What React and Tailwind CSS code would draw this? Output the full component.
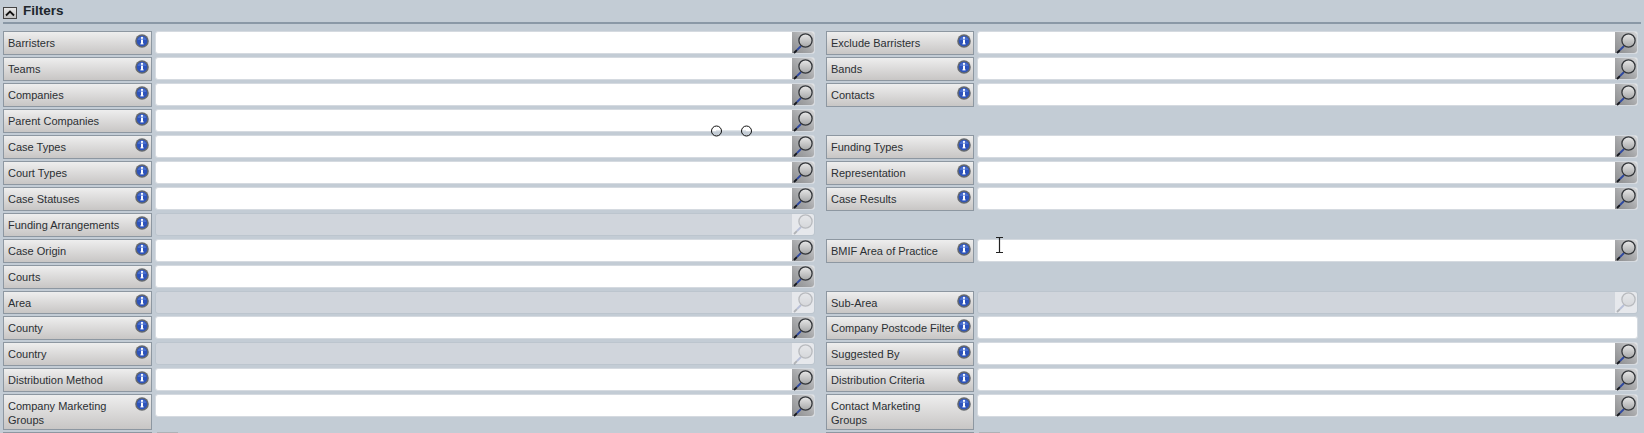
import React from "react";

const rows = [
  ["Barristers", "Exclude Barristers"],
  ["Teams", "Bands"],
  ["Companies", "Contacts"],
  ["Parent Companies", null],
  ["Case Types", "Funding Types"],
  ["Court Types", "Representation"],
  ["Case Statuses", "Case Results"],
  ["Funding Arrangements", null],
  ["Case Origin", "BMIF Area of Practice"],
  ["Courts", null],
  ["Area", "Sub-Area"],
  ["County", "Company Postcode Filter"],
  ["Country", "Suggested By"],
  ["Distribution Method", "Distribution Criteria"],
  ["Company Marketing Groups", "Contact Marketing Groups"],
];

const disabledFields = ["Funding Arrangements", "Area", "Sub-Area", "Country"];

function InfoIcon() {
  return (
    <svg width="14" height="14" viewBox="0 0 14 14" className="shrink-0 mt-[2px]">
      <circle cx="7" cy="7" r="6.8" fill="#65696e" />
      <circle cx="7" cy="7" r="5.3" fill="#2d53bb" />
      <path d="M2.6 6 A4.6 4.6 0 0 1 11.4 6 Z" fill="#4a70d0" />
      <circle cx="7" cy="3.9" r="1.05" fill="#fff" />
      <rect x="6" y="5.6" width="2" height="4.4" fill="#fff" />
      <rect x="5.4" y="9.4" width="3.2" height="1" fill="#fff" />
    </svg>
  );
}

function SearchIcon({ disabled }) {
  return (
    <div
      className={`w-[22px] h-full shrink-0 flex items-center justify-center rounded-r-[3px] ${
        disabled ? "bg-[#e6e8ec]" : "bg-gradient-to-tr from-[#8b8c8e] via-[#a9aaac] to-[#d6d7d9]"
      }`}
    >
      <svg width="22" height="22" viewBox="0 0 22 22" className={disabled ? "opacity-25" : ""}>
        <defs>
          <linearGradient id="lens" x1="0" y1="0" x2="0" y2="1">
            <stop offset="0" stopColor="#e8e8e8" />
            <stop offset="1" stopColor="#a6a7a8" />
          </linearGradient>
        </defs>
        <path d="M2 21 L5 18" stroke="#15181f" strokeWidth="1.8" />
        <path d="M5 18 L9 14" stroke="#2d47a0" strokeWidth="1.8" />
        <circle cx="13.5" cy="8.5" r="6.6" fill="url(#lens)" stroke="#33363a" strokeWidth="1.3" />
      </svg>
    </div>
  );
}

function Field({ label, tall, narrow }) {
  const disabled = disabledFields.includes(label);
  const noSearch = label === "Company Postcode Filter";
  return (
    <div className="flex items-start gap-[3px]">
      <div
        className={`shrink-0 flex items-start justify-between border border-[#8d97a1] bg-gradient-to-b from-[#eeeeee] to-[#c8c6c5] pl-[4px] pr-[2px] ${
          narrow ? "w-[148px]" : "w-[149px]"
        } ${tall ? "h-[35.68px]" : "h-[23.93px]"}`}
      >
        <span className="pt-[4px] text-[11px] leading-[14px] text-[#2b2f33]">{label}</span>
        <InfoIcon />
      </div>
      <div
        className={`flex-1 h-[23px] flex items-stretch rounded-[3px] border ${
          disabled ? "bg-[#d0d5dc] border-[#bcc5ce]" : "bg-white border-[#d5dae0]"
        }`}
      >
        <input disabled={disabled} className="flex-1 min-w-0 outline-none bg-transparent" />
        {!noSearch && <SearchIcon disabled={disabled} />}
      </div>
    </div>
  );
}

export default function App() {
  return (
    <div className="relative h-screen overflow-hidden bg-[#c3ccd5] font-['Liberation_Sans',Arial,sans-serif]">
      <div className="mx-[3px] h-[24px] flex items-center gap-[6px] border-b-2 border-[#8a98a6]">
        <button className="mt-[4px] w-[14px] h-[12px] flex items-center justify-center border border-[#444] bg-gradient-to-b from-[#e8e8e8] to-[#c0c0c0]">
          <svg width="10" height="7" viewBox="0 0 10 7">
            <path d="M1 5.5 L5 1.5 L9 5.5" fill="none" stroke="#111" strokeWidth="1.8" />
          </svg>
        </button>
        <h2 className="text-[13.5px] font-bold text-[#20262c]">Filters</h2>
      </div>

      <div className="pt-[7.3px] pl-[3px] pr-[6px] grid grid-cols-2 gap-x-[11px] gap-y-[2px]">
        {rows.map(([left, right]) => {
          const tall = left === "Company Marketing Groups";
          return (
            <React.Fragment key={left}>
              <Field label={left} tall={tall} />
              {right ? <Field label={right} tall={tall} narrow /> : <div />}
            </React.Fragment>
          );
        })}
        {/* next row, only its top edge is in the picture */}
        <div className="flex gap-[5px]">
          <div className="h-[24px] w-[149px] border border-[#8d97a1] bg-[#eeeeee]" />
          <div className="h-[24px] w-[21px] bg-[#adb1b6]" />
        </div>
        <div className="flex gap-[5px]">
          <div className="h-[24px] w-[148px] border border-[#8d97a1] bg-[#eeeeee]" />
          <div className="h-[24px] w-[21px] bg-[#adb1b6]" />
        </div>
      </div>

      {/* circles and cursor sitting over the form */}
      <svg className="absolute left-[710px] top-[125px]" width="42" height="12" viewBox="0 0 42 12">
        <line x1="6" y1="6" x2="36" y2="6" stroke="#c3ccd5" />
        <circle cx="6.5" cy="6" r="5" fill="none" stroke="#111" />
        <circle cx="36.5" cy="6" r="5" fill="none" stroke="#111" />
      </svg>
      <svg className="absolute left-[995px] top-[237px]" width="9" height="17" viewBox="0 0 9 17">
        <path d="M1 .5 H8 M1 15.5 H8 M4.5 .5 V15.5" fill="none" stroke="#222" strokeWidth="1.2" />
      </svg>
    </div>
  );
}
